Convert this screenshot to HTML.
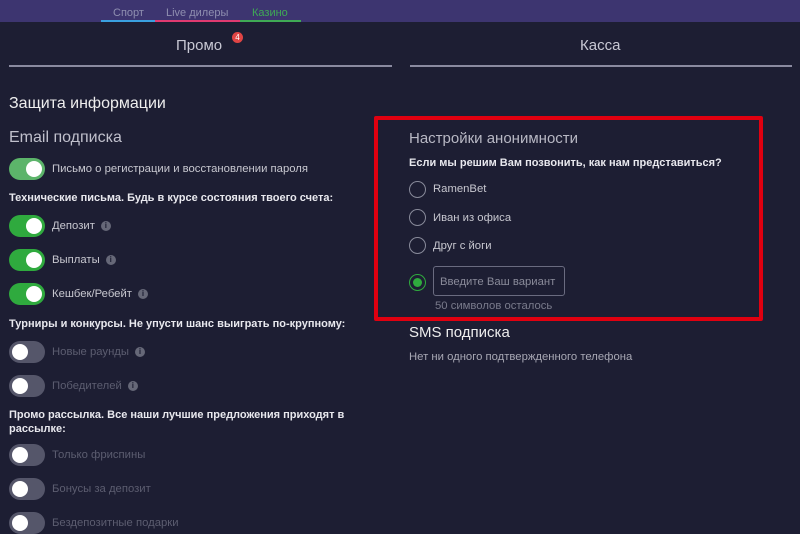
<!DOCTYPE html><html><head><meta charset="utf-8"><style>
body{margin:0;width:800px;height:534px;overflow:hidden;background:#1d1e33;font-family:"Liberation Sans","Noto Sans CJK SC",sans-serif;color:#ddd;position:relative}
.a{position:absolute;white-space:nowrap}
.top{position:absolute;left:0;top:0;width:800px;height:22px;background:#3d3570}
.tg{position:absolute;left:9px;width:36px;height:22px;border-radius:11px}
.tg::after{content:"";position:absolute;top:3px;width:16px;height:16px;border-radius:50%;background:#fff}
.on{background:#2faa3e}.on::after{right:3px}
.off{background:#55566a}.off::after{left:3px}
.lb{font-size:11.3px;color:#c8c8d0}
.dim{color:#5c5d70}
.b{font-size:11px;font-weight:bold;color:#e8e8ee}
.i{display:inline-block;width:10px;height:10px;border-radius:50%;background:#666878;color:#1d1e33;font-size:8px;text-align:center;line-height:10px;margin-left:6px;vertical-align:1px;font-weight:bold}
.r{position:absolute;left:409px;width:15px;height:15px;border:1.5px solid #888a9a;border-radius:50%}
</style></head><body>
<div class="top"></div>
<div class="a" style="left:113px;top:7px;font-size:11px;color:#8f8fb0">Спорт</div>
<div class="a" style="left:166px;top:7px;font-size:11px;color:#8f8fb0">Live дилеры</div>
<div class="a" style="left:252px;top:7px;font-size:11px;color:#3faa55">Казино</div>
<div class="a" style="left:101px;top:20px;width:54px;height:2px;background:#3aa0e0"></div>
<div class="a" style="left:155px;top:20px;width:85px;height:2px;background:#e03a70"></div>
<div class="a" style="left:240px;top:20px;width:61px;height:2px;background:#3faa55"></div>
<div class="a" style="left:176px;top:37px;font-size:15px;color:#c8c8d4">Промо</div>
<div class="a" style="left:232px;top:32px;width:11px;height:11px;border-radius:50%;background:#e04444;color:#fff;font-size:8px;text-align:center;line-height:11px">4</div>
<div class="a" style="left:580px;top:37px;font-size:15px;color:#c8c8d4">Касса</div>
<div class="a" style="left:9px;top:65px;width:383px;height:2px;background:#8a8aa0"></div>
<div class="a" style="left:410px;top:65px;width:382px;height:2px;background:#8a8aa0"></div>
<div class="a" style="left:9px;top:95px;font-size:16px;color:#eee">Защита информации</div>
<div class="a" style="left:9px;top:129px;font-size:16px;color:#c0c0cc">Email подписка</div>
<div class="tg on" style="top:158px;background:#5cb46a"></div><div class="a lb" style="left:52px;top:163px">Письмо о регистрации и восстановлении пароля</div>
<div class="a b" style="left:9px;top:192px">Технические письма. Будь в курсе состояния твоего счета:</div>
<div class="tg on" style="top:215px"></div><div class="a lb" style="left:52px;top:220px">Депозит<span class="i">i</span></div>
<div class="tg on" style="top:249px"></div><div class="a lb" style="left:52px;top:254px">Выплаты<span class="i">i</span></div>
<div class="tg on" style="top:283px"></div><div class="a lb" style="left:52px;top:288px">Кешбек/Ребейт<span class="i">i</span></div>
<div class="a b" style="left:9px;top:318px">Турниры и конкурсы. Не упусти шанс выиграть по-крупному:</div>
<div class="tg off" style="top:341px"></div><div class="a lb dim" style="left:52px;top:346px">Новые раунды<span class="i">i</span></div>
<div class="tg off" style="top:375px"></div><div class="a lb dim" style="left:52px;top:380px">Победителей<span class="i">i</span></div>
<div class="a b" style="left:9px;top:408px;line-height:14px">Промо рассылка. Все наши лучшие предложения приходят в<br>рассылке:</div>
<div class="tg off" style="top:444px"></div><div class="a lb dim" style="left:52px;top:449px">Только фриспины</div>
<div class="tg off" style="top:478px"></div><div class="a lb dim" style="left:52px;top:483px">Бонусы за депозит</div>
<div class="tg off" style="top:512px"></div><div class="a lb dim" style="left:52px;top:517px">Бездепозитные подарки</div>
<div class="a" style="left:374px;top:116px;width:381px;height:197px;border:4px solid #e00010;border-radius:2px"></div>
<div class="a" style="left:409px;top:130px;font-size:15px;color:#b8b8c4">Настройки анонимности</div>
<div class="a b" style="left:409px;top:157px">Если мы решим Вам позвонить, как нам представиться?</div>
<div class="r" style="top:181px"></div><div class="a lb" style="left:433px;top:183px">RamenBet</div>
<div class="r" style="top:209px"></div><div class="a lb" style="left:433px;top:212px">Иван из офиса</div>
<div class="r" style="top:237px"></div><div class="a lb" style="left:433px;top:240px">Друг с йоги</div>
<div class="r" style="top:274px;border-color:#2faa3e"><div style="position:absolute;left:3px;top:3px;width:9px;height:9px;border-radius:50%;background:#2faa3e"></div></div>
<div class="a" style="left:433px;top:266px;width:130px;height:28px;border:1.5px solid #6a6b80;border-radius:3px"></div>
<div class="a lb" style="left:440px;top:276px;color:#8a8b9a">Введите Ваш вариант</div>
<div class="a lb" style="left:435px;top:300px;color:#7a7b8c">50 символов осталось</div>
<div class="a" style="left:409px;top:324px;font-size:15px;color:#eee">SMS подписка</div>
<div class="a lb" style="left:409px;top:351px;color:#a8a8b4">Нет ни одного подтвержденного телефона</div>
</body></html>
